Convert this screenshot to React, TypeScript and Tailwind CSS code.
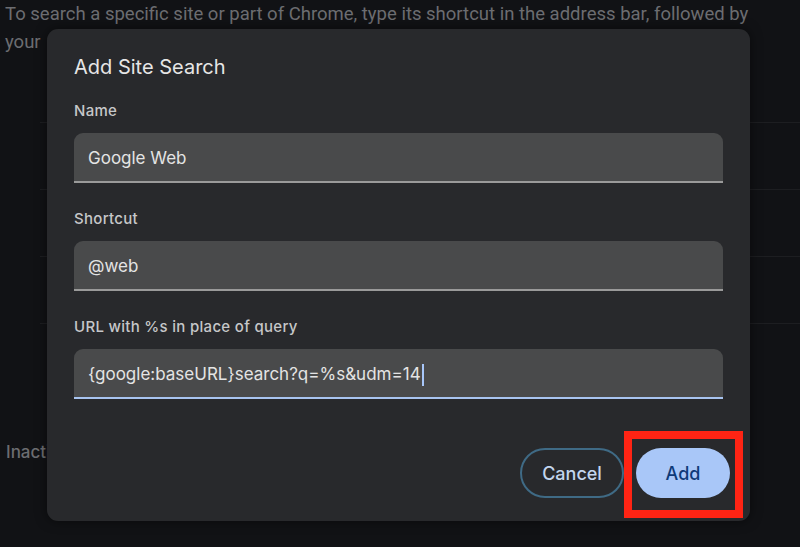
import React from "react";

const font = { fontFamily: "Inter, 'Noto Sans', sans-serif" };

function Field({ label, value, focused }: { label: string; value: string; focused?: boolean }) {
  return (
    <div className="flex flex-col">
      <div className="h-[22px] text-[15px] leading-[22px] font-medium tracking-[0.3px] text-[#c6c7c9]">{label}</div>
      <div
        className={
          "mt-[11px] h-[50px] rounded-t-[9px] bg-[#494a4b] flex items-center px-[14px] pt-[3px] text-[17px] text-[#e4e4e4] border-b-2 " +
          (focused ? "border-[#a8c4f0]" : "border-[#9a9a9a]")
        }
      >
        <span>{value}</span>
        {focused && <span className="ml-[1px] w-[2px] h-[22px] bg-[#a8c7fa]" />}
      </div>
    </div>
  );
}

export default function App() {
  return (
    <div className="relative w-[800px] h-[547px] overflow-hidden bg-[#111215]" style={font}>
      <div className="pl-[5px] pt-[0px] text-[18.5px] leading-[28px] text-[#6c6d71]" style={{ fontFamily: "Roboto, sans-serif" }}>
        <p className="w-[775px]">
          To search a specific site or part of Chrome, type its shortcut in the address bar, followed by your
          <span className="ml-[10px]">preferred keyword.</span>
        </p>
      </div>
      <div className="ml-[40px] flex flex-col">
        <div className="h-[67px] border-b border-[#1d1e21]" />
        <div className="h-[67px] border-b border-[#1d1e21]" />
        <div className="h-[67px] border-b border-[#1d1e21]" />
        <div className="h-[67px] border-b border-[#1d1e21]" />
      </div>
      <div className="pl-[6px] mt-[116px] text-[17px] font-medium text-[#6c6d71]">Inactive shortcuts</div>

      <div className="absolute left-[47px] top-[29px] w-[703px] h-[492px] rounded-[11px] bg-[#28292c] pl-[27px] pr-[27px] pt-[25px] shadow-[0_0_12px_rgba(0,0,0,0.5)]">
        <div className="h-[26px] text-[20px] leading-[26px] text-[#e6e6e6]">Add Site Search</div>
        <div className="mt-[20px] flex flex-col gap-[25px]">
          <Field label="Name" value="Google Web" />
          <Field label="Shortcut" value="@web" />
          <Field label="URL with %s in place of query" value="{google:baseURL}search?q=%s&udm=14" focused />
        </div>
        <div className="mt-[49px] flex justify-end items-center mr-[-7px]">
          <button className="h-[50px] w-[104px] rounded-full border-2 border-[#3f6a85] text-[18px] font-medium text-[#c3d6ef] bg-transparent">
            Cancel
          </button>
          <div className="relative ml-[12px] h-[50px] w-[94px]">
            <button className="h-[50px] w-[94px] rounded-full bg-[#a9c7f8] text-[18px] font-medium text-[#0f3a78]">
              Add
            </button>
            <div className="absolute left-[-12px] top-[-17px] w-[119px] h-[87px] border-[8px] border-[#ff2414]" />
          </div>
        </div>
      </div>
    </div>
  );
}
